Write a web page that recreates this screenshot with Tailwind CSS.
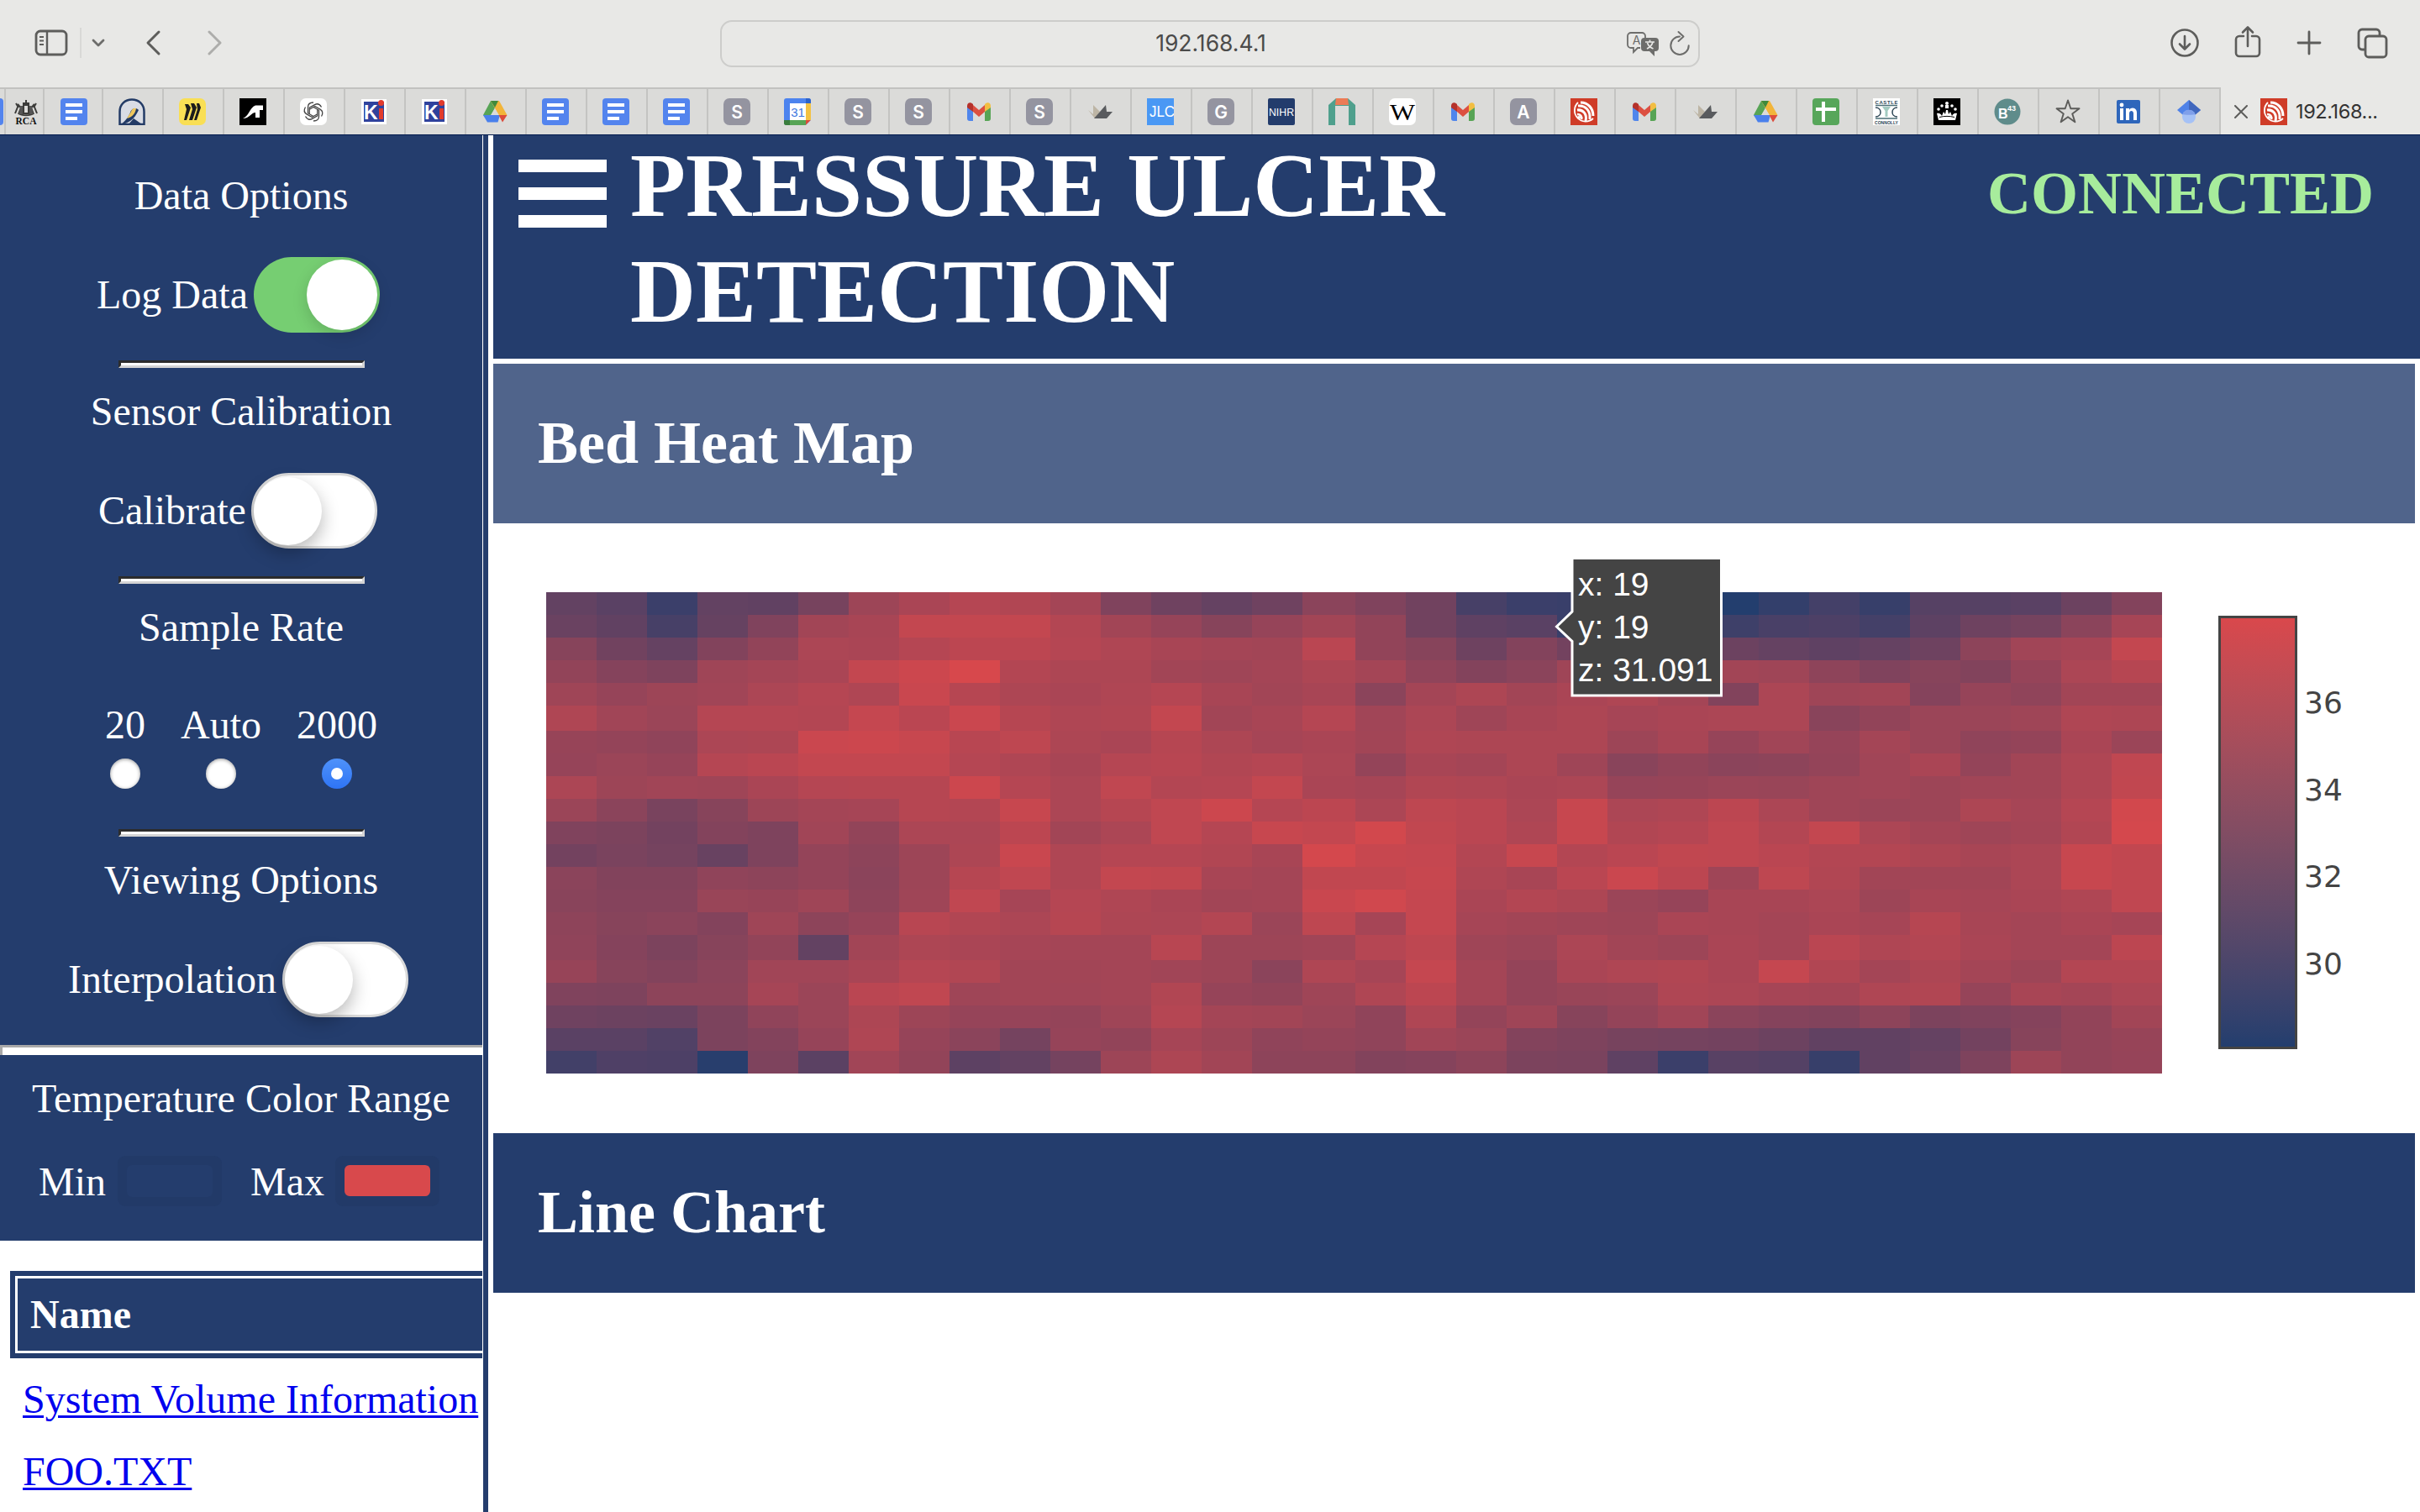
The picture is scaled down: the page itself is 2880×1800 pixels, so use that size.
<!DOCTYPE html>
<html lang="en">
<head>
<meta charset="utf-8">
<title>Pressure Ulcer Detection</title>
<script src="https://cdn.jsdelivr.net/npm/@tailwindcss/browser@4"></script>
</head>
<body class="w-[2880px] h-[1800px] overflow-hidden bg-white flex flex-col font-['Liberation_Serif','Times_New_Roman',serif]">

<!-- favicon symbols -->
<svg width="0" height="0" class="absolute">
  <defs>
    <symbol id="docs" viewBox="0 0 32 32"><rect width="32" height="32" rx="4" fill="#5384ee"/><path d="M6 6h20v4H6zM6 14h20v4H6zM6 22h14v4H6z" fill="#fff"/></symbol>
    <symbol id="rca" viewBox="0 0 32 32"><g fill="none" stroke="#3c3c3a" stroke-width="2"><path d="M16 2v4M12 6h8M13 8h6v10h-6zM3 18l4-10 4 5M29 18l-4-10-4 5M4 6l3 5M28 6l-3 5M7 18c4 3 14 3 18 0M10 11l-3 8M22 11l3 8"/></g><path d="M9 9h3v10H8zM20 9h3l1 10h-4z" fill="#555"/><text x="16" y="30.500" font-family="Liberation Serif" font-size="11.500" font-weight="700" text-anchor="middle" fill="#111">RCA</text></symbol>
    <symbol id="arch" viewBox="0 0 32 32"><path d="M1.500 31V16C1.500 7 8 1.500 16 1.500S30.500 7 30.500 16v15z" fill="#d9dce4" stroke="#233b66" stroke-width="2.500"/><path d="M3 31c9-1 16-6 21-17-4-4-9-1-10 3-2 5-5 9-11 14z" fill="#233b66"/><path d="M21 12c-3-1-5 1-6 4l-5 8c7-2 10-6 11-12z" fill="#efc75e"/><path d="M12 31l6-7 10 7z" fill="#233b66"/></symbol>
    <symbol id="miro" viewBox="0 0 32 32"><rect width="32" height="32" rx="7" fill="#f9df55"/><path d="M7 7h4l3 4-5 15H6l3-13zM14 6h4l3 5-5 15h-4l4-13zM21 6h3l2 5-5 15h-3l4-13z" fill="#1c1c1c"/></symbol>
    <symbol id="slash" viewBox="0 0 32 32"><rect width="32" height="32" fill="#000"/><path d="M4 24c7-2 8-13 15-15.500h9V14h-4v9h-5v-6c-5 0-7 7-15 7z" fill="#fff"/></symbol>
    <symbol id="gpt" viewBox="0 0 32 32"><rect width="32" height="32" rx="7" fill="#fff"/><g fill="none" stroke="#444" stroke-width="1.300"><path id="petal" d="M16 5c-4 0-6.500 2-6.500 5.500v7.200l6.500 3.800"/><use href="#petal" transform="rotate(60 16 16)"/><use href="#petal" transform="rotate(120 16 16)"/><use href="#petal" transform="rotate(180 16 16)"/><use href="#petal" transform="rotate(240 16 16)"/><use href="#petal" transform="rotate(300 16 16)"/></g></symbol>
    <symbol id="ki" viewBox="0 0 32 32"><rect x="1" y="1" width="30" height="30" fill="#fff"/><rect x="4" y="4" width="24" height="24" fill="#2f429d"/><text x="4" y="25" font-family="Liberation Sans" font-size="23" font-weight="700" fill="#fff">K</text><path d="M22 12h5v13h-5z" fill="#e23b2c"/><circle cx="24.500" cy="5.500" r="3.500" fill="#e23b2c"/></symbol>
    <symbol id="drive" viewBox="0 0 32 32"><path d="M11 3h10l-5 8.500z" fill="#3f8a3c"/><path d="M11 3l5 8.500-8.500 15L2 20z" fill="#57a455"/><path d="M11 3h10l9.500 17H20.500z" fill="#f2b53a"/><path d="M11 3h9l-4 8z" fill="#3f8a3c"/><path d="M2 20h20l-2.500 8.500H7z" fill="#4a80ec"/><path d="M20.500 20h10L25 28.500z" fill="#dc4b3c"/><path d="M16 12l4.800 8h-9.600z" fill="#dbdbd9"/></symbol>
    <symbol id="cal" viewBox="0 0 32 32"><rect width="32" height="32" rx="3" fill="#4c83ee"/><path d="M0 26h26v6H3a3 3 0 0 1-3-3z" fill="#57a455"/><path d="M0 26h7v6H3a3 3 0 0 1-3-3z" fill="#3a7d3d"/><path d="M26 6h6v20h-6z" fill="#f3c142"/><path d="M26 0h3a3 3 0 0 1 3 3v3h-6z" fill="#2c63cc"/><path d="M26 26h6l-6 6z" fill="#dc4b3c"/><path d="M32 26v6h-6z" fill="#dbdbd9"/><path d="M7 6h19v20H7z" fill="#fff"/><text x="16.500" y="21.500" font-family="Liberation Sans" font-size="15" text-anchor="middle" fill="#4078e0">31</text></symbol>
    <symbol id="gmail" viewBox="0 0 32 32"><path d="M2 9v15a3 3 0 0 0 3 3h4V14z" fill="#5086ec"/><path d="M30 9v15a3 3 0 0 1-3 3h-4V14z" fill="#57a455"/><path d="M9 8l7 6 7-6v8l-7 6-7-6z" fill="#dc4f41"/><path d="M2 9c0-4 4-5 7-2v9l-7-5z" fill="#b5322b"/><path d="M30 9c0-4-4-5-7-2v9l7-5z" fill="#f2be42"/></symbol>
    <symbol id="leaf" viewBox="0 0 32 32"><path d="M2 14l6 5V8l8 8-6 8z" fill="#bdb5a5"/><path d="M9 24l14-16 1 8 7 0-7 8z" fill="#595b5e"/></symbol>
    <symbol id="jlc" viewBox="0 0 32 32"><rect width="32" height="32" fill="#4a98f4"/><text x="3" y="22" font-family="Liberation Sans" font-size="19" textLength="30" lengthAdjust="spacingAndGlyphs" fill="#fff">JLC</text></symbol>
    <symbol id="nihr" viewBox="0 0 32 32"><rect width="32" height="32" rx="2" fill="#233c6c"/><text x="16" y="21" font-family="Liberation Sans" font-size="13" textLength="30" lengthAdjust="spacingAndGlyphs" text-anchor="middle" fill="#fff">NIHR</text></symbol>
    <symbol id="gate" viewBox="0 0 32 32"><path d="M0 32V8l9-8h14l9 8v24h-8V9H8v23z" fill="#4fa08d"/><path d="M9 0h14l1 8H8z" fill="#ec7b56"/></symbol>
    <symbol id="wiki" viewBox="0 0 32 32"><rect width="32" height="32" rx="7" fill="#fff"/><text x="16" y="26" font-family="Liberation Serif" font-size="28" textLength="30" lengthAdjust="spacingAndGlyphs" text-anchor="middle" fill="#000">W</text></symbol>
    <symbol id="esp" viewBox="0 0 32 32"><rect width="32" height="32" fill="#cf3c28"/><g fill="none" stroke="#fff" stroke-width="2.600"><path d="M9 5A13 13 0 1 0 27 24" stroke-width="1.800"/><path d="M12 5c9 0 15 7 15 16M9 9c9-1 15 6 14 16M8 14c7-1 12 5 10 13" stroke-width="3"/><path d="M8 19c4 0 6 3 5 6"/></g><circle cx="10" cy="23" r="2" fill="#fff"/></symbol>
    <symbol id="sheet" viewBox="0 0 32 32"><rect width="32" height="32" rx="4" fill="#57a65a"/><path d="M11 4h4v7h13v4H15v13h-4V15H4v-4h7z" fill="#fff"/></symbol>
    <symbol id="castle" viewBox="0 0 32 32"><rect width="32" height="32" fill="#fff"/><text x="16" y="6.500" font-family="Liberation Sans" font-size="6" font-weight="700" textLength="27" text-anchor="middle" fill="#2d4655">CASTLE</text><path d="M3 8.500h26M3 24h26" stroke="#4c6f77" stroke-width="1.500"/><path d="M3 11c8 0 8 11 0 11M29 11c-8 0-8 11 0 11" fill="none" stroke="#2d4655" stroke-width="1.500"/><path d="M11 10h10l-3.500 5v7h-3v-7z" fill="#a3cbc1"/><text x="16" y="30.500" font-family="Liberation Sans" font-size="5" font-weight="700" textLength="28" lengthAdjust="spacingAndGlyphs" text-anchor="middle" fill="#2d4655">CONNOLLY</text></symbol>
    <symbol id="crown" viewBox="0 0 32 32"><rect width="32" height="32" fill="#000"/><g fill="#fff"><path d="M6 26l-2-8c3-1 5 1 6 3l2-5 2 3 1-5h2l1 5 2-3 2 5c1-2 3-4 6-3l-2 8z"/><path d="M14 8h4v4h-4z"/><circle cx="16" cy="6" r="2"/><circle cx="10" cy="9" r="1.800"/><circle cx="22" cy="9" r="1.800"/><circle cx="6" cy="13" r="1.800"/><circle cx="26" cy="13" r="1.800"/></g><path d="M7 22.500c6-1.500 12-1.500 18 0" stroke="#000" fill="none"/></symbol>
    <symbol id="b43" viewBox="0 0 32 32"><circle cx="16" cy="16" r="15.500" fill="#5f8c8b"/><text x="5" y="24" font-family="Liberation Sans" font-size="16" font-weight="700" fill="#fff">B</text><text x="16" y="15" font-family="Liberation Sans" font-size="9" font-weight="700" fill="#fff">43</text></symbol>
    <symbol id="star" viewBox="0 0 32 32"><path d="M16 2.500l3.300 9.800h10.200l-8.300 6.100 3.200 9.900-8.400-6.100-8.400 6.100 3.200-9.900-8.300-6.100h10.200z" fill="none" stroke="#5c5c5a" stroke-width="1.900" stroke-linejoin="round"/></symbol>
    <symbol id="linked" viewBox="0 0 32 32"><rect x="2" y="2" width="28" height="28" rx="2" fill="#2e66bb"/><path d="M6 12h4v14H6zM13 12h4v2c2-4 9-3 9 3v9h-4v-8c0-4-5-4-5 0v8h-4z" fill="#fff"/><circle cx="8" cy="8" r="2.400" fill="#fff"/></symbol>
    <symbol id="scholar" viewBox="0 0 32 32"><path d="M16 2L2 14l7 6h14l7-6z" fill="#4f82e8"/><path d="M16 2l14 12-7 6-7-6z" fill="#4167bd"/><circle cx="16" cy="22" r="8" fill="#a5c1f6"/><path d="M8.500 19a8 8 0 0 1 15 0c-1 1-14 1-15 0z" fill="#7f9fea"/></symbol>
    <symbol id="ls" viewBox="0 0 32 32"><rect width="32" height="32" rx="7" fill="#9494a0"/><text x="16" y="23.500" font-family="Inter" font-size="21" font-weight="600" text-anchor="middle" fill="#fff">S</text></symbol>
    <symbol id="lg" viewBox="0 0 32 32"><rect width="32" height="32" rx="7" fill="#9494a0"/><text x="16" y="23.500" font-family="Inter" font-size="21" font-weight="600" text-anchor="middle" fill="#fff">G</text></symbol>
    <symbol id="la" viewBox="0 0 32 32"><rect width="32" height="32" rx="7" fill="#9494a0"/><text x="16" y="23.500" font-family="Inter" font-size="21" font-weight="600" text-anchor="middle" fill="#fff">A</text></symbol>
  </defs>
</svg>

<!-- browser toolbar -->
<header class="h-[104px] shrink-0 bg-[#e8e8e6] flex items-start pt-6">
  <div class="w-[857px] shrink-0 flex items-center h-[54px] pl-[41px]">
    <svg class="w-[42px] h-[34px]" viewBox="0 0 42 34" fill="none" stroke="#5d5d5b"><rect x="2" y="3" width="36" height="28" rx="5" stroke-width="2.800"/><path d="M15 3v28" stroke-width="2.400"/><path d="M6 10h5M6 14.500h5M6 19h5" stroke-width="1.800"/></svg>
    <div class="ml-3 w-0.5 h-9 bg-[#d8d8d6]"></div>
    <svg class="ml-3 w-4 h-4" viewBox="0 0 16 16" fill="none" stroke="#6d6d6b" stroke-width="2.800" stroke-linecap="round" stroke-linejoin="round"><path d="M2 5l6 6 6-6"/></svg>
    <svg class="ml-[48px] w-5 h-8" viewBox="0 0 20 32" fill="none" stroke="#5d5d5b" stroke-width="3" stroke-linecap="round" stroke-linejoin="round"><path d="M16 3L3 16l13 13"/></svg>
    <svg class="ml-[52px] w-5 h-8" viewBox="0 0 20 32" fill="none" stroke="#adadab" stroke-width="3" stroke-linecap="round" stroke-linejoin="round"><path d="M4 3l13 13L4 29"/></svg>
  </div>
  <div class="w-[1166px] h-14 shrink-0 rounded-[14px] border-2 border-[#cdcdcb] flex items-center pl-[214px]">
    <div class="w-[736px] text-center text-[26.500px] text-[#4b4b4a] font-['Inter',sans-serif]">192.168.4.1</div>
    <svg class="ml-[127px] w-10 h-8" viewBox="0 0 40 32"><path d="M5 3h13a4 4 0 0 1 4 4v2M16 21h-3l-5 5v-5H5a4 4 0 0 1-4-4V7a4 4 0 0 1 4-4" fill="none" stroke="#6d6d6b" stroke-width="1.800"/><text x="11.500" y="17" font-family="Inter" font-size="14" text-anchor="middle" fill="#6d6d6b">A</text><path d="M21 9h13a4 4 0 0 1 4 4v8a4 4 0 0 1-4 4h-1v6l-6-6h-6a4 4 0 0 1-4-4v-8a4 4 0 0 1 4-4z" fill="#6d6d6b"/><path d="M22 14h11M27.500 11.500v2.500M24 22c4-2 6-4 7-8M24.500 15c1 3 3 5.500 7 7" fill="none" stroke="#e8e8e6" stroke-width="1.700"/></svg>
    <svg class="ml-[10px] w-[26px] h-8" viewBox="0 0 26 32" fill="none" stroke="#6d6d6b" stroke-width="2" stroke-linecap="round" stroke-linejoin="round"><path d="M13 7.500a10.700 10.700 0 1 0 10.700 10.700M11.500 2l6 5.500-6 5.500"/></svg>
  </div>
  <div class="flex items-center h-[54px] pl-[559px]">
    <svg class="w-9 h-9" viewBox="0 0 36 36" fill="none" stroke="#5d5d5b" stroke-width="2.600" stroke-linecap="round" stroke-linejoin="round"><circle cx="18" cy="18" r="15.500"/><path d="M18 10v15M12 19.500l6 6 6-6"/></svg>
    <svg class="ml-[40px] w-[34px] h-10 -mt-1" viewBox="0 0 34 40" fill="none" stroke="#5d5d5b" stroke-width="2.600" stroke-linecap="round" stroke-linejoin="round"><path d="M12 14H7a4 4 0 0 0-4 4v16a4 4 0 0 0 4 4h20a4 4 0 0 0 4-4V18a4 4 0 0 0-4-4h-5M17 26V4M11 9.500L17 3.500l6 6"/></svg>
    <svg class="ml-[41px] w-[30px] h-[30px]" viewBox="0 0 30 30" fill="none" stroke="#5d5d5b" stroke-width="2.800" stroke-linecap="round"><path d="M15 2v26M2 15h26"/></svg>
    <svg class="ml-[41px] w-[38px] h-[38px]" viewBox="0 0 38 38" fill="none" stroke="#5d5d5b" stroke-width="2.800"><path d="M10 27H7a4 4 0 0 1-4-4V7a4 4 0 0 1 4-4h17a4 4 0 0 1 4 4v3"/><rect x="11" y="11" width="25" height="25" rx="4"/></svg>
  </div>
</header>

<!-- tab strip -->
<nav class="h-14 shrink-0 flex bg-[#dbdbd9] border-t-2 border-[#c2c2c0]">
  <div class="w-[5px] flex items-center justify-end overflow-hidden"><svg class="w-8 h-8 shrink-0 mr-px"><use href="#docs"/></svg></div>
  <div class="w-[46px] border-l-2 border-[#c4c4c2] flex items-center justify-center pl-1"><svg class="w-[32px] h-[32px]"><use href="#rca"/></svg></div>
  <div class="w-[70px] border-l-2 border-[#c4c4c2] flex items-center justify-center pl-[2px]"><svg class="w-8 h-8"><use href="#docs"/></svg></div>
  <div id="tabs" class="flex"></div>
  <div class="flex-1 -mt-0.5 border-l-2 border-[#c4c4c2] bg-[#e8e8e6] flex items-center pl-4 pt-0.5">
    <svg class="w-4 h-4" viewBox="0 0 16 16" stroke="#5d5d5b" stroke-width="2" stroke-linecap="round"><path d="M1 1l14 14M15 1L1 15"/></svg>
    <svg class="ml-[15px] w-8 h-8"><use href="#esp"/></svg>
    <div class="ml-[10px] text-[23.500px] text-[#333] font-['Inter',sans-serif] tracking-[-0.4px]">192.168...</div>
  </div>
</nav>

<main class="relative flex h-[1640px]">
  <div class="absolute inset-x-0 top-0 h-px bg-[#021a4e] z-10"></div>

  <!-- sidebar -->
  <aside class="w-[574px] shrink-0 overflow-hidden text-[48px] leading-[56px] text-white flex flex-col whitespace-nowrap">
    <section class="bg-[#243d6d] h-[1317px] shrink-0 flex flex-col pt-[45px]">
      <h2 class="text-center">Data Options</h2>
      <div class="mt-[45px] h-[90px] flex items-center pl-[115px] gap-[7px]">
        <span>Log Data</span>
        <span class="w-[150px] h-[90px] rounded-full bg-[#76ce72] flex items-center justify-end pr-[3px]"><span class="w-[84px] h-[84px] rounded-full bg-white shadow-[0_6px_18px_rgba(0,0,0,0.15)]"></span></span>
      </div>
      <div class="mt-[33px] mx-[141px] w-[293px] h-[9px] bg-white border-[3px] border-t-[#2c2c2c] border-l-[#2c2c2c] border-b-[#d4d4d4] border-r-[#d4d4d4]"></div>
      <h2 class="mt-6 text-center">Sensor Calibration</h2>
      <div class="mt-[45px] h-[90px] flex items-center pl-[117px] gap-1.5">
        <span>Calibrate</span>
        <span class="w-[150px] h-[90px] rounded-full bg-white border-[3px] border-[#dadada] flex items-center"><span class="w-[81px] h-[81px] rounded-full bg-white shadow-[0_9px_21px_rgba(0,0,0,0.28)]"></span></span>
      </div>
      <div class="mt-[33px] mx-[141px] w-[293px] h-[9px] bg-white border-[3px] border-t-[#2c2c2c] border-l-[#2c2c2c] border-b-[#d4d4d4] border-r-[#d4d4d4]"></div>
      <h2 class="mt-6 text-center">Sample Rate</h2>
      <div class="mt-[60px] flex justify-center gap-[42px]">
        <label class="flex flex-col items-center gap-3">20<span class="w-9 h-9 rounded-full bg-white shadow-[inset_0_1px_4px_rgba(0,0,0,0.4)]"></span></label>
        <label class="flex flex-col items-center gap-3">Auto<span class="w-9 h-9 rounded-full bg-white shadow-[inset_0_1px_4px_rgba(0,0,0,0.4)]"></span></label>
        <label class="flex flex-col items-center gap-3">2000<span class="w-9 h-9 rounded-full bg-linear-to-b from-[#4f92fa] to-[#2e74f5] flex items-center justify-center"><span class="w-3.5 h-3.5 rounded-full bg-white"></span></span></label>
      </div>
      <div class="mt-12 mx-[141px] w-[293px] h-[9px] bg-white border-[3px] border-t-[#2c2c2c] border-l-[#2c2c2c] border-b-[#d4d4d4] border-r-[#d4d4d4]"></div>
      <h2 class="mt-6 text-center">Viewing Options</h2>
      <div class="mt-[45px] h-[90px] flex items-center pl-[81px] gap-[7px]">
        <span>Interpolation</span>
        <span class="w-[150px] h-[90px] rounded-full bg-white border-[3px] border-[#dadada] flex items-center"><span class="w-[81px] h-[81px] rounded-full bg-white shadow-[0_9px_21px_rgba(0,0,0,0.28)]"></span></span>
      </div>
      <div class="mt-[33px] h-3 bg-white border-t-[3px] border-l-[3px] border-[#a9a9a9]"></div>
      <h2 class="mt-6 text-center">Temperature Color Range</h2>
      <div class="mt-10 flex pl-[46px]">
        <span class="w-[94px] pt-[3px]">Min</span>
        <span class="w-[124px] h-[60px] rounded-[9px] bg-[#223a68] p-[11px]"><span class="block h-[38px] rounded-md bg-[#243d6d]"></span></span>
        <span class="ml-[34px] w-[101px] pt-[3px]">Max</span>
        <span class="w-[124px] h-[60px] rounded-[9px] bg-[#223a68] p-[11px]"><span class="block h-[37px] rounded-md bg-[#d8494c]"></span></span>
      </div>
    </section>
    <div class="mt-9 ml-3 w-[600px] h-[104px] shrink-0 border-[6px] border-[#243d6d] bg-[#243d6d]">
      <div class="h-full border-[3px] border-white pl-[15px] pt-[15px] font-bold">Name</div>
    </div>
    <a class="mt-[21px] ml-[27px] w-fit text-[#0000ee] underline decoration-[3px] underline-offset-[3px]">System Volume Information</a>
    <a class="mt-[30px] ml-[27px] w-fit text-[#0000ee] underline decoration-[3px] underline-offset-[3px]">FOO.TXT</a>
  </aside>
  <div class="ml-px w-1.5 shrink-0 bg-[#243d6d]"></div>

  <!-- content -->
  <div class="ml-1.5 flex-1 text-white font-bold">
    <div class="h-[267px] bg-[#243d6d] flex items-start pl-[30px] pr-[55px]">
      <div class="mt-[30px] w-[105px] flex flex-col gap-[18px]">
        <div class="h-[15px] bg-white"></div><div class="h-[15px] bg-white"></div><div class="h-[15px] bg-white"></div>
      </div>
      <h1 class="ml-7 -mt-0.5 w-[1100px] text-[108px] leading-[126px]">PRESSURE ULCER DETECTION</h1>
      <div class="ml-auto mt-[28px] text-[72px] leading-[84px] text-[#a7ec9c]">CONNECTED</div>
    </div>
    <div class="mt-1.5 h-[190px] w-[2287px] bg-[#50648b] flex items-center pl-[53px] pb-0.5 text-[72px]">Bed Heat Map</div>

    <div class="relative h-[726px] w-[2287px] font-normal">
      <div id="map" class="absolute left-[63px] top-[82px] grid grid-cols-[repeat(15,60px)_63px_repeat(16,60px)] grid-rows-[repeat(5,27px)_30px_repeat(9,27px)_30px_repeat(5,27px)]"></div>

      <!-- hover label -->
      <svg class="absolute left-[1260px] top-[38px] w-[210px] h-[175px]" viewBox="0 0 210 175">
        <path d="M24 3.500H201.500V167H24V102.500L5.500 85 24 67z" fill="#444" stroke="#fff" stroke-width="3"/>
      </svg>
      <div class="absolute left-[1291px] top-[47px] text-[39px] leading-[51px] whitespace-pre font-['Liberation_Sans',Arial,sans-serif]">x: 19
y: 19
z: 31.091</div>

      <!-- colour bar -->
      <div class="absolute left-[2053px] top-[110px] flex">
        <div class="w-[94px] h-[516px] border-[3px] border-[#444] bg-linear-to-b from-[#d9484c] to-[#233e6e]"></div>
        <div class="ml-2 mt-[84px] flex flex-col gap-[63.500px] text-[36px] leading-[40px] text-[#444] font-['DejaVu_Sans',sans-serif]"><span>36</span><span>34</span><span>32</span><span>30</span></div>
      </div>
    </div>

    <div class="h-[190px] w-[2287px] bg-[#243d6d] flex items-center pl-[53px] pb-0.5 text-[72px]">Line Chart</div>
  </div>
</main>

<script>
  const tabs = "arch miro slash gpt ki ki drive docs docs docs ls cal ls ls gmail ls leaf jlc lg nihr gate wiki gmail la esp gmail leaf drive sheet castle crown b43 star linked scholar".split(" ");
  document.getElementById("tabs").innerHTML = tabs.map(t =>
    `<div class="w-[72px] border-l-2 border-[#c4c4c2] flex items-center justify-center pr-0.5"><svg class="w-8 h-8"><use href="#${t}"/></svg></div>`).join("");

  // Relative temperature per cell in percent of the colour range
  const rows = [
    "35 30 13 35 34 46 67 74 80 78 71 51 42 36 42 57 51 43 20 13 12 8 4 0 9 18 11 28 28 30 40 53",
    "39 34 20 37 51 70 73 88 88 88 79 70 63 55 63 70 61 43 33 30 12 15 15 15 21 23 18 32 41 45 57 72",
    "55 43 36 52 61 75 74 80 84 84 80 77 73 71 70 83 61 55 41 53 44 40 40 40 36 33 36 41 58 69 72 88",
    "61 54 50 68 71 74 88 93 99 79 76 76 70 68 71 76 71 60 53 57 68 70 70 70 68 59 51 55 52 63 75 81",
    "68 63 67 69 75 80 77 91 81 76 74 77 80 73 70 73 57 71 76 70 74 77 71 52 75 68 70 54 63 60 70 70",
    "77 69 66 80 80 79 89 83 92 81 77 78 88 70 73 80 69 75 68 73 76 72 74 75 75 56 61 66 66 68 77 76",
    "64 62 60 75 76 92 93 90 82 85 76 74 81 76 72 74 70 77 76 76 76 67 73 63 69 63 71 66 60 62 74 66",
    "63 66 63 80 83 88 88 88 80 77 73 80 82 78 80 75 62 73 71 76 68 56 61 57 58 62 69 74 62 70 77 86",
    "75 67 69 68 74 80 81 81 93 80 75 86 79 80 88 74 72 78 77 74 75 63 64 66 65 68 69 67 69 70 77 87",
    "66 57 47 55 67 71 72 81 79 90 75 81 86 93 80 84 75 85 83 75 90 75 77 84 75 68 66 67 76 72 80 96",
    "51 49 44 53 50 69 61 75 75 84 70 75 86 80 90 88 96 87 83 77 90 78 80 86 79 88 75 71 68 71 78 97",
    "44 48 45 38 50 62 58 67 76 91 77 80 80 78 73 97 90 89 79 90 79 83 87 86 83 79 79 76 73 75 90 87",
    "57 52 52 60 58 62 57 67 81 86 77 88 87 73 71 87 87 90 77 73 83 92 84 68 85 78 70 70 70 75 90 87",
    "56 54 54 65 64 68 59 68 86 72 80 77 74 70 71 91 95 89 74 79 76 66 63 73 73 75 67 73 72 74 77 86",
    "59 55 57 53 68 58 63 82 78 75 81 76 75 79 66 85 72 89 72 70 68 67 74 73 71 74 72 81 73 71 74 72",
    "60 54 49 55 61 35 70 76 74 72 71 71 82 67 67 69 80 85 68 66 75 70 67 74 71 83 77 79 74 71 71 84",
    "64 55 52 57 69 69 73 80 78 70 70 71 69 67 57 77 72 89 71 62 74 77 78 74 89 78 71 76 71 67 79 79",
    "51 50 58 58 72 66 83 86 68 70 69 71 78 63 61 68 77 84 71 62 65 66 77 75 72 71 77 78 63 73 71 75",
    "42 40 39 49 60 66 76 67 63 63 62 68 80 71 70 66 60 77 62 68 55 62 69 57 54 52 58 49 51 54 61 70",
    "30 30 25 49 53 63 77 63 57 45 63 61 72 67 60 62 60 69 66 53 50 46 45 44 40 34 34 36 44 55 61 64",
    "17 24 23 3 50 31 69 61 32 35 45 67 76 70 58 58 52 54 58 49 48 33 13 29 27 11 34 39 50 67 61 63"
  ];
  const low = [35, 62, 110], high = [217, 72, 76];
  document.getElementById("map").innerHTML = rows.join(" ").split(" ").map(v => {
    const c = low.map((l, i) => Math.round(l + (high[i] - l) * v / 100));
    return `<i style="background:rgb(${c})"></i>`;
  }).join("");
</script>
</body>
</html>
